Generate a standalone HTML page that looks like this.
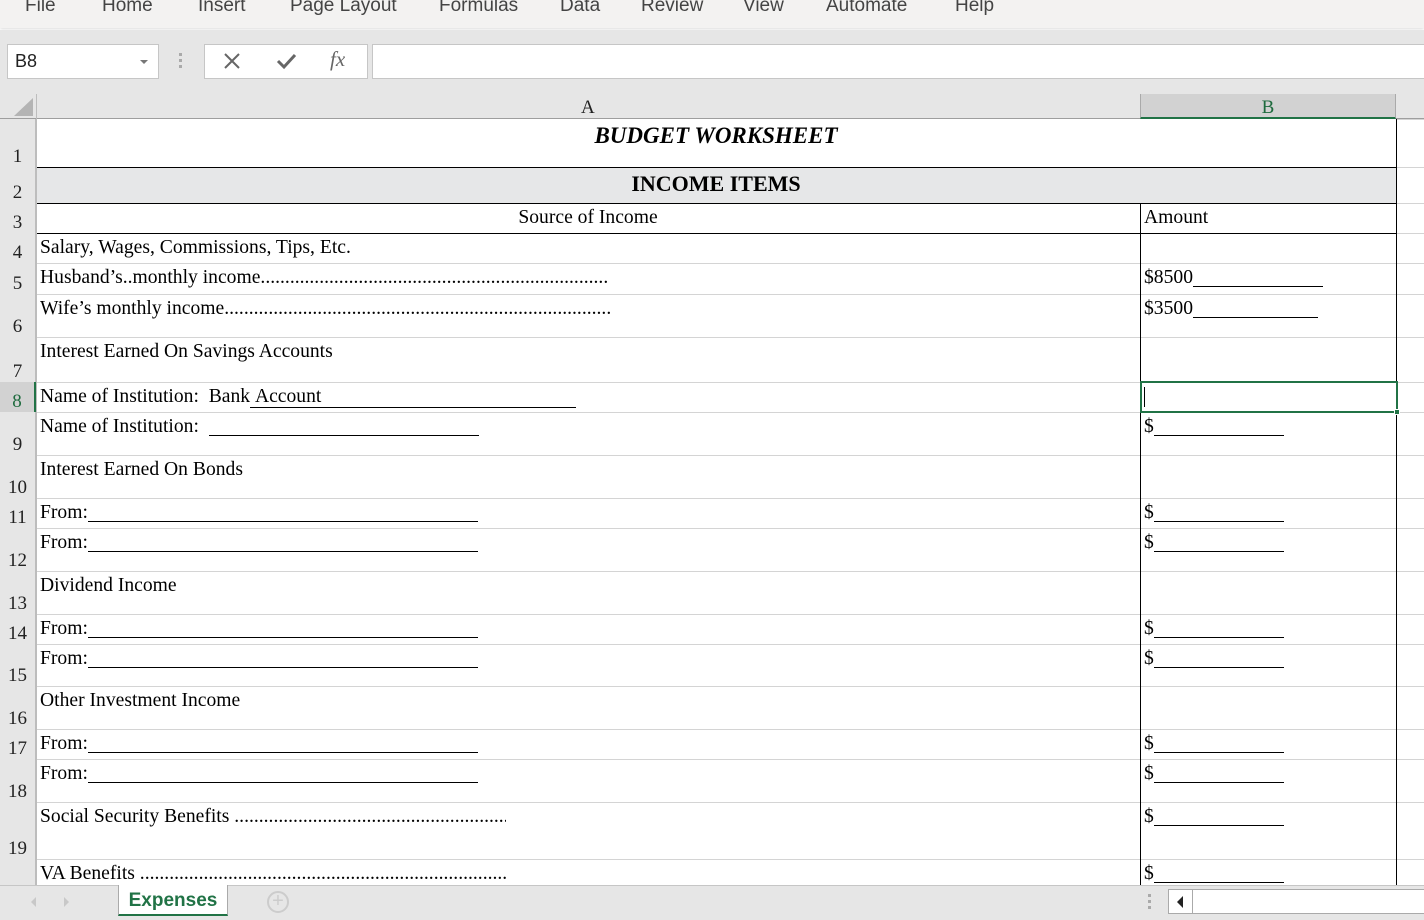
<!DOCTYPE html>
<html><head><meta charset="utf-8"><style>
*{margin:0;padding:0;box-sizing:border-box}
body{width:1424px;height:920px;overflow:hidden;background:#fff;position:relative;font-family:"Liberation Serif",serif;font-size:19.6px;color:#000}
.a{position:absolute}
.ui{font-family:"Liberation Sans",sans-serif}
.rh{position:absolute;left:0;width:36px;background:#e6e6e6;border-right:1px solid #bdbdbd;text-align:center;font-size:19px;color:#222}
.rh span{position:absolute;bottom:0;left:0;right:0;line-height:20px}
.hl{position:absolute;left:36px;right:0;height:1px;background:#d4d4d4}
.t{position:absolute;left:40px;white-space:nowrap;line-height:22px;margin-top:1px}
.b{position:absolute;left:1144px;white-space:nowrap;line-height:22px;margin-top:1px}
.ul{display:inline-block;border-bottom:1px solid #000;height:20px;vertical-align:top}
.row{display:flex;overflow:hidden;white-space:nowrap}
.row .d{flex:1;overflow:hidden}
</style></head><body>
<div class="a ui" style="left:0;top:0;width:1424px;height:28px;background:#f3f2f1;box-shadow:0 1px 3px rgba(0,0,0,.15)"></div>
<div class="a ui" style="top:-5px;left:0;font-size:19px;color:#444;white-space:nowrap">
<span class="a" style="left:25px">File</span><span class="a" style="left:102px">Home</span><span class="a" style="left:198px">Insert</span><span class="a" style="left:290px">Page&nbsp;Layout</span><span class="a" style="left:439px">Formulas</span><span class="a" style="left:560px">Data</span><span class="a" style="left:641px">Review</span><span class="a" style="left:743px">View</span><span class="a" style="left:826px">Automate</span><span class="a" style="left:955px">Help</span></div>
<div class="a" style="left:0;top:30px;width:1424px;height:64px;background:#e6e6e6"></div>
<div class="a ui" style="left:7px;top:44px;width:152px;height:35px;background:#fff;border:1px solid #c6c6c6;font-size:18px;padding:6px 0 0 7px;color:#222">B8<span class="a" style="right:10px;top:15px;border:4px solid transparent;border-top:4px solid #777"></span></div>
<div class="a" style="left:179px;top:53px;width:3px;height:3px;background:#aaa;box-shadow:0 6px 0 #aaa,0 12px 0 #aaa"></div>
<div class="a" style="left:204px;top:44px;width:164px;height:35px;background:#fff;border:1px solid #c6c6c6"></div>
<svg class="a" style="left:222px;top:52px" width="20" height="18"><path d="M3 2L17 16M17 2L3 16" stroke="#666" stroke-width="2"/></svg>
<svg class="a" style="left:276px;top:52px" width="22" height="18"><path d="M2 9L8 15L19 3" stroke="#666" stroke-width="3" fill="none"/></svg>
<div class="a" style="left:330px;top:47px;font-style:italic;color:#666;font-size:21px">fx</div>
<div class="a" style="left:372px;top:44px;width:1060px;height:35px;background:#fff;border:1px solid #c6c6c6"></div>
<div class="a" style="left:0;top:94px;width:1424px;height:25px;background:#e6e6e6;border-bottom:1px solid #9e9e9e"></div>
<svg class="a" style="left:14px;top:98px" width="20" height="18"><path d="M19 0L19 18L0 18Z" fill="#b4b4b4"/></svg>
<div class="a" style="left:36px;top:94px;width:1px;height:25px;background:#bdbdbd"></div>
<div class="a" style="left:581px;top:97px;font-size:19px;color:#222">A</div>
<div class="a" style="left:1140px;top:94px;width:256px;height:25px;background:#d2d2d2;border-left:1px solid #aaa;border-right:1px solid #aaa;border-bottom:2px solid #217346;text-align:center;color:#1e6b3e;font-size:19px;line-height:27px">B</div>
<div class="rh" style="top:119px;height:48px"><span>1</span></div>
<div class="rh" style="top:167px;height:36px"><span>2</span></div>
<div class="rh" style="top:203px;height:30px"><span>3</span></div>
<div class="rh" style="top:233px;height:30px"><span>4</span></div>
<div class="rh" style="top:263px;height:31px"><span>5</span></div>
<div class="rh" style="top:294px;height:43px"><span>6</span></div>
<div class="rh" style="top:337px;height:45px"><span>7</span></div>
<div class="rh" style="top:382px;height:30px;background:#d2d2d2;border-right:2px solid #217346;color:#1e6b3e"><span>8</span></div>
<div class="rh" style="top:412px;height:43px"><span>9</span></div>
<div class="rh" style="top:455px;height:43px"><span>10</span></div>
<div class="rh" style="top:498px;height:30px"><span>11</span></div>
<div class="rh" style="top:528px;height:43px"><span>12</span></div>
<div class="rh" style="top:571px;height:43px"><span>13</span></div>
<div class="rh" style="top:614px;height:30px"><span>14</span></div>
<div class="rh" style="top:644px;height:42px"><span>15</span></div>
<div class="rh" style="top:686px;height:43px"><span>16</span></div>
<div class="rh" style="top:729px;height:30px"><span>17</span></div>
<div class="rh" style="top:759px;height:43px"><span>18</span></div>
<div class="rh" style="top:802px;height:57px"><span>19</span></div>
<div class="rh" style="top:859px;height:30px"></div>
<div class="hl" style="top:263px"></div><div class="hl" style="top:294px"></div><div class="hl" style="top:337px"></div><div class="hl" style="top:382px"></div><div class="hl" style="top:412px"></div><div class="hl" style="top:455px"></div><div class="hl" style="top:498px"></div><div class="hl" style="top:528px"></div><div class="hl" style="top:571px"></div><div class="hl" style="top:614px"></div><div class="hl" style="top:644px"></div><div class="hl" style="top:686px"></div><div class="hl" style="top:729px"></div><div class="hl" style="top:759px"></div><div class="hl" style="top:802px"></div><div class="hl" style="top:859px"></div>
<div class="a" style="left:1396px;top:119px;width:28px;height:1px;background:#d4d4d4;box-shadow:0 48px 0 #d4d4d4,0 84px 0 #d4d4d4,0 114px 0 #d4d4d4"></div>
<div class="a" style="left:36px;top:167px;width:1361px;height:37px;background:#e6e7e8;border-top:1px solid #000;border-bottom:1px solid #000"></div>
<div class="a" style="left:36px;top:233px;width:1361px;height:1px;background:#000"></div>
<div class="a" style="left:1140px;top:203px;width:1px;height:690px;background:#000"></div>
<div class="a" style="left:1396px;top:119px;width:1px;height:770px;background:#000"></div>
<div class="a" style="left:36px;top:119px;width:1px;height:770px;background:#bdbdbd"></div>
<div class="a" style="left:36px;width:1360px;top:123px;text-align:center;font-weight:bold;font-style:italic;font-size:23px">BUDGET WORKSHEET</div>
<div class="a" style="left:36px;width:1360px;top:171px;text-align:center;font-weight:bold;font-size:22px">INCOME ITEMS</div>
<div class="a" style="left:36px;width:1104px;top:207px;text-align:center">Source of Income</div>
<div class="b" style="top:206px">Amount</div>
<div class="t" style="top:236px">Salary, Wages, Commissions, Tips, Etc.</div>
<div class="t row" style="top:266px;width:567px">Husband’s..monthly income<span class="d">..............................................................................................................................................</span></div>
<div class="b" style="top:266px">$8500<span class="ul" style="width:130px"></span></div>
<div class="t row" style="top:297px;width:572px">Wife’s monthly income<span class="d">..............................................................................................................................................</span></div>
<div class="b" style="top:297px">$3500<span class="ul" style="width:125px"></span></div>
<div class="t" style="top:340px">Interest Earned On Savings Accounts</div>
<div class="t" style="top:385px">Name of Institution:&nbsp; Bank<span style="border-bottom:1px solid #000;display:inline-block;width:326px;line-height:21px">&nbsp;Account</span></div>
<div class="t" style="top:415px">Name of Institution:&nbsp; <span class="ul" style="width:270px"></span></div>
<div class="b" style="top:415px">$<span class="ul" style="width:130px"></span></div>
<div class="t" style="top:458px">Interest Earned On Bonds</div>
<div class="t" style="top:501px">From:<span class="ul" style="width:390px"></span></div><div class="b" style="top:501px">$<span class="ul" style="width:130px"></span></div>
<div class="t" style="top:531px">From:<span class="ul" style="width:390px"></span></div><div class="b" style="top:531px">$<span class="ul" style="width:130px"></span></div>
<div class="t" style="top:574px">Dividend Income</div>
<div class="t" style="top:617px">From:<span class="ul" style="width:390px"></span></div><div class="b" style="top:617px">$<span class="ul" style="width:130px"></span></div>
<div class="t" style="top:647px">From:<span class="ul" style="width:390px"></span></div><div class="b" style="top:647px">$<span class="ul" style="width:130px"></span></div>
<div class="t" style="top:689px">Other Investment Income</div>
<div class="t" style="top:732px">From:<span class="ul" style="width:390px"></span></div><div class="b" style="top:732px">$<span class="ul" style="width:130px"></span></div>
<div class="t" style="top:762px">From:<span class="ul" style="width:390px"></span></div><div class="b" style="top:762px">$<span class="ul" style="width:130px"></span></div>
<div class="t row" style="top:805px;width:466px">Social Security Benefits&nbsp;<span class="d">..............................................................................................</span></div>
<div class="b" style="top:805px">$<span class="ul" style="width:130px"></span></div>
<div class="t row" style="top:862px;width:467px">VA Benefits&nbsp;<span class="d">..............................................................................................................................</span></div>
<div class="b" style="top:862px">$<span class="ul" style="width:130px"></span></div>
<div class="a" style="left:1140px;top:381px;width:258px;height:32px;border:2px solid #217346"></div>
<div class="a" style="left:1394px;top:409px;width:6px;height:6px;background:#217346;border:1px solid #fff"></div>
<div class="a" style="left:1144px;top:387px;width:1px;height:20px;background:#000"></div>
<div class="a ui" style="left:0;top:885px;width:1424px;height:35px;background:#e6e6e6;border-top:1px solid #c6c6c6"></div>
<svg class="a" style="left:28px;top:895px" width="50" height="14"><path d="M8 2L3 7L8 12Z" fill="#c8c8c8"/><path d="M36 2L41 7L36 12Z" fill="#c8c8c8"/></svg>
<div class="a ui" style="left:118px;top:885px;width:110px;height:31px;background:#fff;border:1px solid #aaa;border-top:none;border-bottom:2px solid #217346;color:#217346;font-weight:bold;font-size:19px;text-align:center;line-height:31px">Expenses</div>
<div class="a" style="left:267px;top:891px;width:22px;height:22px;border:2px solid #ccc;border-radius:50%;color:#ccc;text-align:center;line-height:17px;font-family:'Liberation Sans';font-size:20px">+</div>
<div class="a" style="left:1148px;top:894px;width:3px;height:3px;background:#aaa;box-shadow:0 6px 0 #aaa,0 12px 0 #aaa"></div>
<div class="a" style="left:1168px;top:889px;width:260px;height:25px;background:#fff;border:1px solid #aaa"></div>
<div class="a" style="left:1192px;top:889px;width:1px;height:25px;background:#aaa"></div>
<svg class="a" style="left:1175px;top:895px" width="12" height="14"><path d="M8 1L2 7L8 13Z" fill="#222"/></svg>
</body></html>
